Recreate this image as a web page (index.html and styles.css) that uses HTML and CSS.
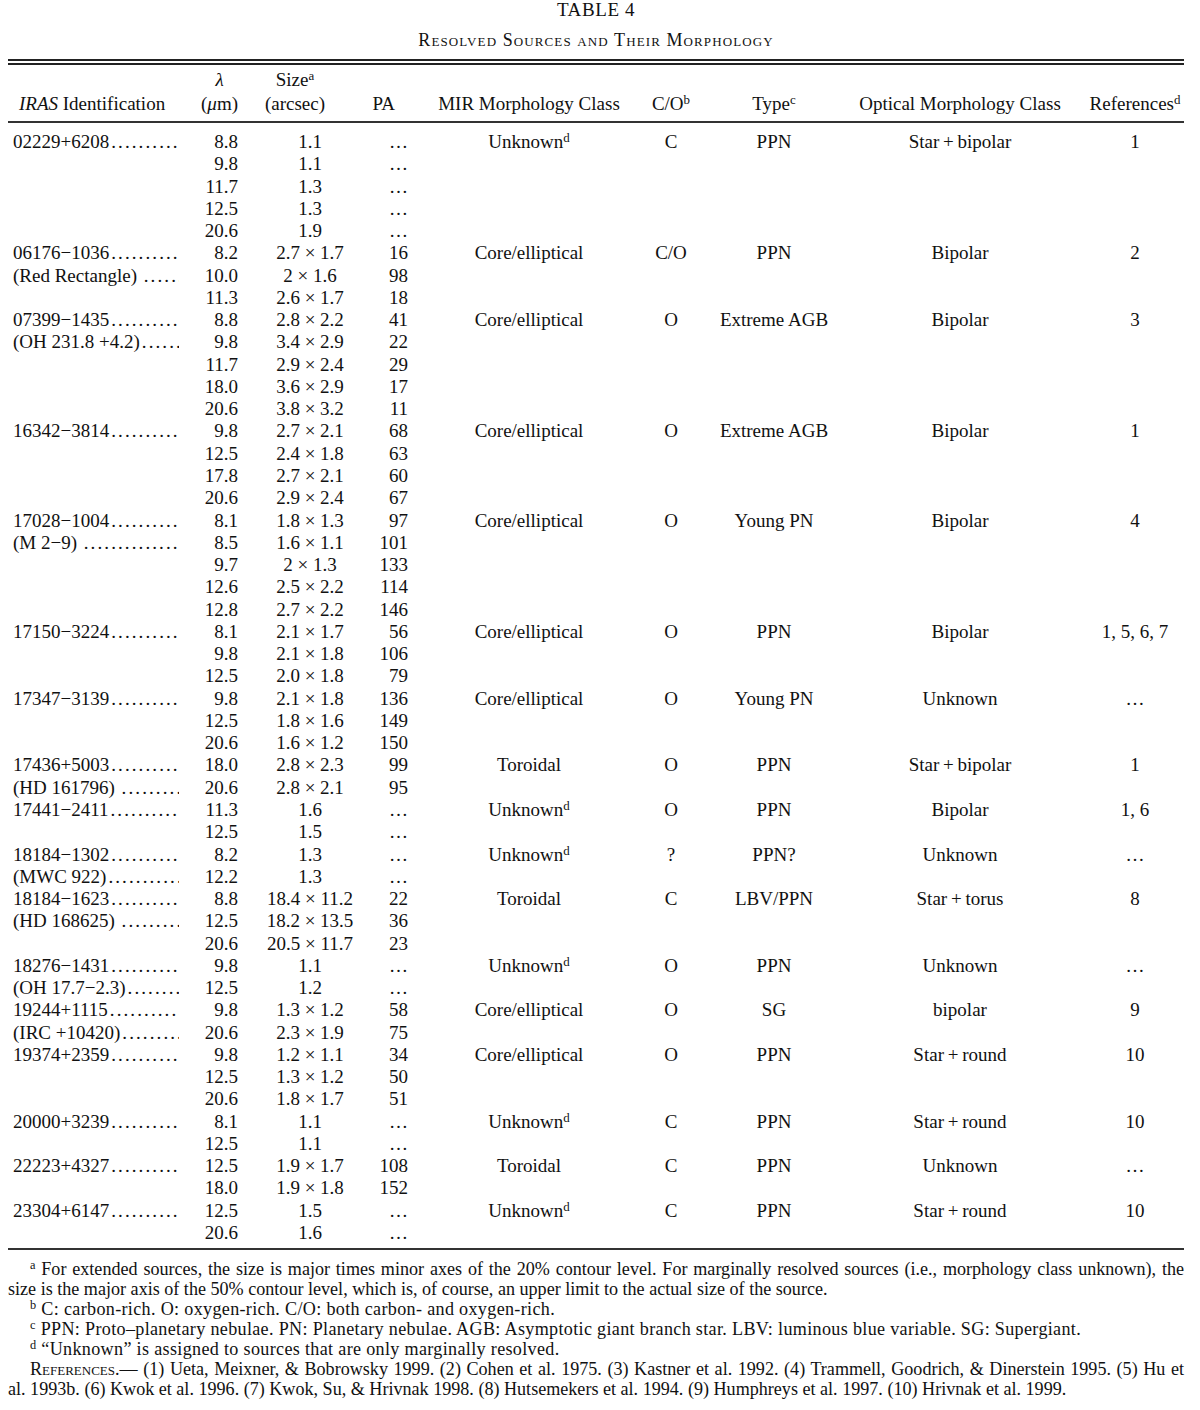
FILE: index.html
```html
<!DOCTYPE html>
<html>
<head>
<meta charset="utf-8">
<title>Table 4</title>
<link rel="stylesheet" href="styles.css">
</head>
<body>
<div class="page">
  <div class="title">TABLE 4</div>
  <div class="subtitle">Resolved Sources and Their Morphology</div>
  <div class="rule2"></div>
  <table class="data">
    <colgroup>
      <col class="c1"><col class="c2"><col class="c3"><col class="c4"><col class="c5"><col class="c6"><col class="c7"><col class="c8"><col class="c9">
    </colgroup>
    <thead>
      <tr>
        <th class="h-id"><i>IRAS</i> Identification</th>
        <th class="h-lam"><span class="stack"><i>λ</i><br>(<i>μ</i>m)</span></th>
        <th class="h-size">Size<sup>a</sup><br>(arcsec)</th>
        <th class="h-pa">PA</th>
        <th>MIR Morphology Class</th>
        <th>C/O<sup>b</sup></th>
        <th>Type<sup>c</sup></th>
        <th>Optical Morphology Class</th>
        <th class="h-ref">References<sup>d</sup></th>
      </tr>
    </thead>
    <tbody>
      <tr><td class="nm">02229+6208</td><td>8.8</td><td>1.1</td><td>&hellip;</td><td>Unknown<sup>d</sup></td><td>C</td><td>PPN</td><td>Star&thinsp;+&thinsp;bipolar</td><td>1</td></tr>
      <tr><td></td><td>9.8</td><td>1.1</td><td>&hellip;</td><td colspan="5"></td></tr>
      <tr><td></td><td>11.7</td><td>1.3</td><td>&hellip;</td><td colspan="5"></td></tr>
      <tr><td></td><td>12.5</td><td>1.3</td><td>&hellip;</td><td colspan="5"></td></tr>
      <tr><td></td><td>20.6</td><td>1.9</td><td>&hellip;</td><td colspan="5"></td></tr>

      <tr><td class="nm">06176−1036</td><td>8.2</td><td>2.7 × 1.7</td><td>16</td><td>Core/elliptical</td><td>C/O</td><td>PPN</td><td>Bipolar</td><td>2</td></tr>
      <tr><td class="nm">(Red Rectangle)&nbsp;</td><td>10.0</td><td>2 × 1.6</td><td>98</td><td colspan="5"></td></tr>
      <tr><td></td><td>11.3</td><td>2.6 × 1.7</td><td>18</td><td colspan="5"></td></tr>

      <tr><td class="nm">07399−1435</td><td>8.8</td><td>2.8 × 2.2</td><td>41</td><td>Core/elliptical</td><td>O</td><td>Extreme AGB</td><td>Bipolar</td><td>3</td></tr>
      <tr><td class="nm">(OH 231.8 +4.2)</td><td>9.8</td><td>3.4 × 2.9</td><td>22</td><td colspan="5"></td></tr>
      <tr><td></td><td>11.7</td><td>2.9 × 2.4</td><td>29</td><td colspan="5"></td></tr>
      <tr><td></td><td>18.0</td><td>3.6 × 2.9</td><td>17</td><td colspan="5"></td></tr>
      <tr><td></td><td>20.6</td><td>3.8 × 3.2</td><td>11</td><td colspan="5"></td></tr>

      <tr><td class="nm">16342−3814</td><td>9.8</td><td>2.7 × 2.1</td><td>68</td><td>Core/elliptical</td><td>O</td><td>Extreme AGB</td><td>Bipolar</td><td>1</td></tr>
      <tr><td></td><td>12.5</td><td>2.4 × 1.8</td><td>63</td><td colspan="5"></td></tr>
      <tr><td></td><td>17.8</td><td>2.7 × 2.1</td><td>60</td><td colspan="5"></td></tr>
      <tr><td></td><td>20.6</td><td>2.9 × 2.4</td><td>67</td><td colspan="5"></td></tr>

      <tr><td class="nm">17028−1004</td><td>8.1</td><td>1.8 × 1.3</td><td>97</td><td>Core/elliptical</td><td>O</td><td>Young PN</td><td>Bipolar</td><td>4</td></tr>
      <tr><td class="nm">(M 2−9)&nbsp;</td><td>8.5</td><td>1.6 × 1.1</td><td>101</td><td colspan="5"></td></tr>
      <tr><td></td><td>9.7</td><td>2 × 1.3</td><td>133</td><td colspan="5"></td></tr>
      <tr><td></td><td>12.6</td><td>2.5 × 2.2</td><td>114</td><td colspan="5"></td></tr>
      <tr><td></td><td>12.8</td><td>2.7 × 2.2</td><td>146</td><td colspan="5"></td></tr>

      <tr><td class="nm">17150−3224</td><td>8.1</td><td>2.1 × 1.7</td><td>56</td><td>Core/elliptical</td><td>O</td><td>PPN</td><td>Bipolar</td><td>1, 5, 6, 7</td></tr>
      <tr><td></td><td>9.8</td><td>2.1 × 1.8</td><td>106</td><td colspan="5"></td></tr>
      <tr><td></td><td>12.5</td><td>2.0 × 1.8</td><td>79</td><td colspan="5"></td></tr>

      <tr><td class="nm">17347−3139</td><td>9.8</td><td>2.1 × 1.8</td><td>136</td><td>Core/elliptical</td><td>O</td><td>Young PN</td><td>Unknown</td><td>&hellip;</td></tr>
      <tr><td></td><td>12.5</td><td>1.8 × 1.6</td><td>149</td><td colspan="5"></td></tr>
      <tr><td></td><td>20.6</td><td>1.6 × 1.2</td><td>150</td><td colspan="5"></td></tr>

      <tr><td class="nm">17436+5003</td><td>18.0</td><td>2.8 × 2.3</td><td>99</td><td>Toroidal</td><td>O</td><td>PPN</td><td>Star&thinsp;+&thinsp;bipolar</td><td>1</td></tr>
      <tr><td class="nm">(HD 161796)&nbsp;</td><td>20.6</td><td>2.8 × 2.1</td><td>95</td><td colspan="5"></td></tr>

      <tr><td class="nm">17441−2411</td><td>11.3</td><td>1.6</td><td>&hellip;</td><td>Unknown<sup>d</sup></td><td>O</td><td>PPN</td><td>Bipolar</td><td>1, 6</td></tr>
      <tr><td></td><td>12.5</td><td>1.5</td><td>&hellip;</td><td colspan="5"></td></tr>

      <tr><td class="nm">18184−1302</td><td>8.2</td><td>1.3</td><td>&hellip;</td><td>Unknown<sup>d</sup></td><td>?</td><td>PPN?</td><td>Unknown</td><td>&hellip;</td></tr>
      <tr><td class="nm">(MWC 922)</td><td>12.2</td><td>1.3</td><td>&hellip;</td><td colspan="5"></td></tr>

      <tr><td class="nm">18184−1623</td><td>8.8</td><td>18.4 × 11.2</td><td>22</td><td>Toroidal</td><td>C</td><td>LBV/PPN</td><td>Star&thinsp;+&thinsp;torus</td><td>8</td></tr>
      <tr><td class="nm">(HD 168625)&nbsp;</td><td>12.5</td><td>18.2 × 13.5</td><td>36</td><td colspan="5"></td></tr>
      <tr><td></td><td>20.6</td><td>20.5 × 11.7</td><td>23</td><td colspan="5"></td></tr>

      <tr><td class="nm">18276−1431</td><td>9.8</td><td>1.1</td><td>&hellip;</td><td>Unknown<sup>d</sup></td><td>O</td><td>PPN</td><td>Unknown</td><td>&hellip;</td></tr>
      <tr><td class="nm">(OH 17.7−2.3)</td><td>12.5</td><td>1.2</td><td>&hellip;</td><td colspan="5"></td></tr>

      <tr><td class="nm">19244+1115</td><td>9.8</td><td>1.3 × 1.2</td><td>58</td><td>Core/elliptical</td><td>O</td><td>SG</td><td>bipolar</td><td>9</td></tr>
      <tr><td class="nm">(IRC +10420)</td><td>20.6</td><td>2.3 × 1.9</td><td>75</td><td colspan="5"></td></tr>

      <tr><td class="nm">19374+2359</td><td>9.8</td><td>1.2 × 1.1</td><td>34</td><td>Core/elliptical</td><td>O</td><td>PPN</td><td>Star&thinsp;+&thinsp;round</td><td>10</td></tr>
      <tr><td></td><td>12.5</td><td>1.3 × 1.2</td><td>50</td><td colspan="5"></td></tr>
      <tr><td></td><td>20.6</td><td>1.8 × 1.7</td><td>51</td><td colspan="5"></td></tr>

      <tr><td class="nm">20000+3239</td><td>8.1</td><td>1.1</td><td>&hellip;</td><td>Unknown<sup>d</sup></td><td>C</td><td>PPN</td><td>Star&thinsp;+&thinsp;round</td><td>10</td></tr>
      <tr><td></td><td>12.5</td><td>1.1</td><td>&hellip;</td><td colspan="5"></td></tr>

      <tr><td class="nm">22223+4327</td><td>12.5</td><td>1.9 × 1.7</td><td>108</td><td>Toroidal</td><td>C</td><td>PPN</td><td>Unknown</td><td>&hellip;</td></tr>
      <tr><td></td><td>18.0</td><td>1.9 × 1.8</td><td>152</td><td colspan="5"></td></tr>

      <tr><td class="nm">23304+6147</td><td>12.5</td><td>1.5</td><td>&hellip;</td><td>Unknown<sup>d</sup></td><td>C</td><td>PPN</td><td>Star&thinsp;+&thinsp;round</td><td>10</td></tr>
      <tr><td></td><td>20.6</td><td>1.6</td><td>&hellip;</td><td colspan="5"></td></tr>
    </tbody>
  </table>
  <div class="notes">
    <p class="fn"><span class="jl"><sup>a</sup> For extended sources, the size is major times minor axes of the 20% contour level. For marginally resolved sources (i.e., morphology class unknown), the</span><span class="l2">size is the major axis of the 50% contour level, which is, of course, an upper limit to the actual size of the source.</span></p>
    <p class="fn wide"><sup>b</sup> C: carbon-rich. O: oxygen-rich. C/O: both carbon- and oxygen-rich.</p>
    <p class="fn wide"><sup>c</sup> PPN: Proto–planetary nebulae. PN: Planetary nebulae. AGB: Asymptotic giant branch star. LBV: luminous blue variable. SG: Supergiant.</p>
    <p class="fn wide"><sup>d</sup> “Unknown” is assigned to sources that are only marginally resolved.</p>
    <p class="fn"><span class="jl"><span class="sc">References</span>.— (1) Ueta, Meixner, &amp; Bobrowsky 1999. (2) Cohen et al. 1975. (3) Kastner et al. 1992. (4) Trammell, Goodrich, &amp; Dinerstein 1995. (5) Hu et</span><span class="l2">al. 1993b. (6) Kwok et al. 1996. (7) Kwok, Su, &amp; Hrivnak 1998. (8) Hutsemekers et al. 1994. (9) Humphreys et al. 1997. (10) Hrivnak et al. 1999.</span></p>
  </div>
</div>
</body>
</html>
```

FILE: styles.css
```css
html, body {
  margin: 0;
  padding: 0;
  background: #ffffff;
}

body {
  color: #111111;
  font-family: "Liberation Serif", "Times New Roman", serif;
}

.page {
  width: 1176px;
  margin-left: 8px;
}

.title {
  text-align: center;
  font-size: 19px;
  line-height: 20px;
  letter-spacing: 0.6px;
}

.subtitle {
  margin-top: 10px;
  text-align: center;
  font-size: 18px;
  line-height: 20px;
  letter-spacing: 1.1px;
  font-variant: small-caps;
}

.rule2 {
  margin-top: 9px;
  height: 2px;
  border-top: 2px solid #222;
  border-bottom: 2px solid #222;
}

.data {
  width: 1176px;
  table-layout: fixed;
  border-collapse: collapse;
  border-spacing: 0;
  font-size: 19px;
  border-bottom: 2px solid #333;
}

.c1 { width: 171px; }
.c2 { width: 61px; }
.c3 { width: 130px; }
.c4 { width: 40px; }
.c5 { width: 238px; }
.c6 { width: 46px; }
.c7 { width: 160px; }
.c8 { width: 212px; }
.c9 { width: 118px; }

.data th {
  font-weight: normal;
  line-height: 24px;
  padding: 3px 0 5px 0;
  vertical-align: bottom;
  text-align: center;
  white-space: nowrap;
  border-bottom: 2px solid #333;
}

.data .h-id {
  text-align: left;
  padding-left: 11px;
}

.data .h-lam {
  text-align: right;
  padding-right: 2px;
}

.stack {
  display: inline-block;
  text-align: center;
}

.data .h-size {
  padding-left: 10px;
  padding-right: 30px;
}

.data .h-pa {
  text-align: right;
  padding-right: 15px;
}

.data .h-ref {
  padding-left: 20px;
}

.data td {
  padding: 0;
  line-height: 22.27px;
  text-align: center;
  white-space: nowrap;
  vertical-align: middle;
}

.data td:nth-child(1) {
  text-align: left;
  padding-left: 5px;
  overflow: hidden;
}

.data td.nm::after {
  content: "..............................................";
  letter-spacing: 2.1px;
  margin-left: 2px;
}

.data td:nth-child(2) {
  text-align: right;
  padding-right: 2px;
}

.data td:nth-child(3) {
  padding-left: 10px;
}

.data td:nth-child(4) {
  text-align: right;
  padding-right: 2px;
}

.data td:nth-child(9) {
  padding-left: 20px;
}

.data tbody tr:first-child td {
  padding-top: 8px;
}

.data tbody tr:last-child td {
  padding-bottom: 4px;
}

sup {
  font-size: 0.68em;
  line-height: 0;
  vertical-align: 0.5em;
}

.notes {
  margin-top: 9px;
}

.fn {
  margin: 0;
  font-size: 18.1px;
  line-height: 20px;
  text-indent: 22px;
}

.fn.wide {
  letter-spacing: 0.33px;
}

.jl {
  display: block;
  text-align: justify;
  text-align-last: justify;
}

.l2 {
  display: block;
  text-indent: 0;
}

.sc {
  font-variant: small-caps;
}
```
